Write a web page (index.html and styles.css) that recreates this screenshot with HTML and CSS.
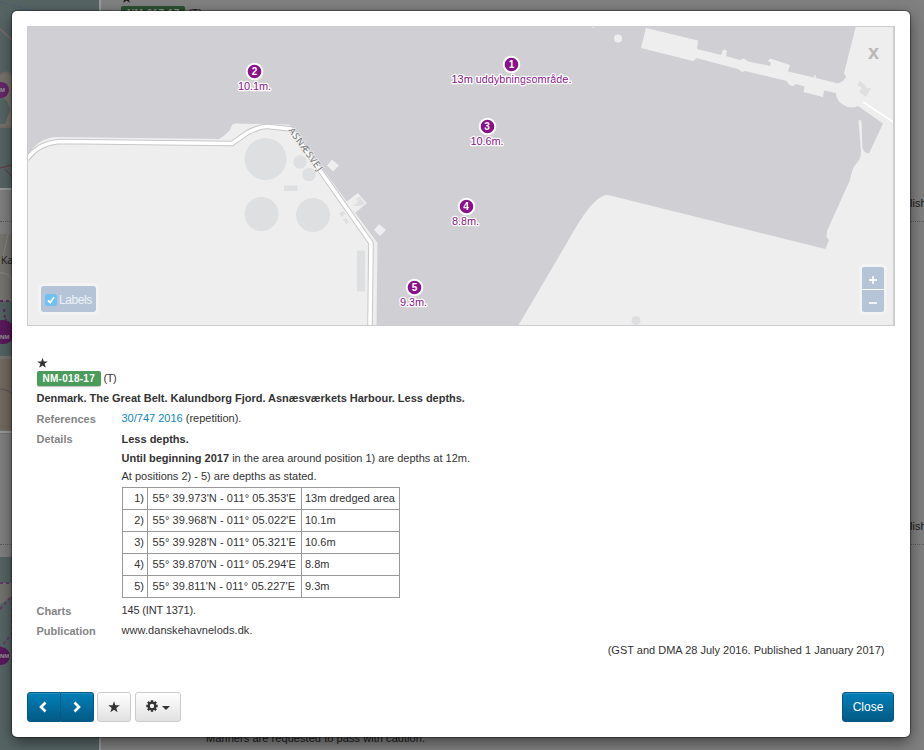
FILE: index.html
```
<!DOCTYPE html>
<html lang="en">
<head>
<meta charset="utf-8">
<title>NM-018-17</title>
<link rel="stylesheet" href="styles.css">
</head>
<body>
<div class="page">
  <section class="row row-first">
    <svg class="thumb" width="101" height="190" viewBox="0 0 101 190">
      <rect width="101" height="190" fill="#9b9b9b"/><rect width="99" height="188" fill="#566564"/>
      <path d="M0 29L12 40M0 75q8-6 12 2v50H0z" stroke="#766b6a" stroke-width="2" fill="#77746d"/>
      <path d="M0 98q7-2 10 12l-5 14H0z" fill="#566564"/>
      <path d="M0 168l12-3M5 169l7 8" stroke="#6e3442" fill="none"/>
      <circle cy="90" cx="1" r="8" fill="#65276a"/><text x="0" y="92" class="thumb-mark">M</text>
      <path d="M0 2l40 10" stroke="#4d5c74" stroke-dasharray="4 2"/>
    </svg>
    <div class="row-text">
      <svg class="star" viewBox="0 0 12 12"><path d="M6 .2l1.400 4.100h4.400L8.300 6.900l1.300 4.400L6 8.700l-3.600 2.600 1.300-4.400L.2 4.300h4.400z"/></svg>
      <div><span class="badge">NM-017-17</span> (T)</div>
    </div>
    <span class="published">Published</span>
  </section>
  <section class="row row-second">
    <svg class="thumb" width="101" height="200" viewBox="0 0 101 200">
      <rect width="101" height="200" fill="#777570"/>
      <path d="M0 67h14v55H0z" fill="#536363"/><path d="M0 67h14M4 75l2 20M0 105l7-22" stroke="#582b5b" stroke-width="2" stroke-dasharray="3 3" fill="none"/>
      <circle cx="3" cy="98" r="12" fill="#5b195e"/><text x="0" y="105" class="thumb-mark">NM</text>
      <path d="M0 125h14v71H0z" fill="#746a60"/><path d="M0 155q8 0 14 7" stroke="#555" fill="none"/>
      <text x="1" y="30" class="place">Ka</text>
      <path d="M0 39q8-2 14 10M8 0L3 24" stroke="#888" fill="none"/>
      <path d="M0 198h101" stroke="#999" stroke-width="2"/>
    </svg>
    <span class="published">Published</span>
  </section>
  <section class="row row-third">
    <svg class="thumb" width="101" height="194" viewBox="0 0 101 194">
      <rect width="101" height="194" fill="#9b9b9b"/><rect width="99" height="194" fill="#566564"/>
      <path d="M0 26h12v13L0 48z" fill="#73736f"/><path d="M0 26h12M0 52l12-13v38L0 91" stroke="#643b67" stroke-width="2" stroke-dasharray="3 3" fill="none"/>
      <circle cx="1" cy="99" r="9" fill="#5b195e"/><text x="0" y="101" class="thumb-mark">NM</text>
    </svg>
    <p class="caution">Mariners are requested to pass with caution.</p>
  </section>
</div>

<main class="modal">
  <div class="map">
    <svg class="map-art" width="868" height="300" viewBox="27 26 868 300">
      <rect x="27" y="26" width="868" height="300" fill="#d0cfd4"/>
      <g fill="#eee">
        <path d="M27 157Q37 138 56 137L219 139Q226 135 230 130L232 125Q233 123.500 236 123.500L288 124.500Q291 125 293 129L377.500 243L376.500 326H27z"/>
        <path d="M641 48L646 28L698 40.500L697 49L721 55L723 50Q725 49 727 51L726 56L740 60L744 58.500L748 61.500L770 66L771 63L768 61L770 58.500L790 65L788 71.500L814 77.500L815 74L816 78L838 83.500Q844 81 846 77L844 73L856 26H895V326H518L568 241Q592 197 606 195L610 195.500L825.500 249L829 240L826.500 237L827 231L850 180Q852 168 856 164Q861 159 861 152L858.500 121Q860 118 861.500 122L862.500 148Q864 153 869 153.500L883 123.500L858 106Q850 110 842 104Q836 100 836 93L824 90.500L823 97L803.500 92L804.500 86.500L796 84Q792 88 788 83.500L787 81L745 71L742 72L738 69L700 59L697 58L693 61z"/>
        <circle cx="618" cy="38.500" r="4"/><circle cx="593" cy="26.500" r="1.500"/>
        <path d="M332 159.500l7 6-6 6-6-6zM379 224l7 6-6 6-6-6zM346 202l12-9 4 5 5 5-12 10z"/>
      </g>
      <g fill="#dedfe1">
        <circle cx="265.500" cy="159" r="21"/><circle cx="300" cy="162" r="6.800"/><circle cx="309" cy="174.500" r="6.800"/>
        <circle cx="261.500" cy="214" r="17"/><circle cx="313" cy="215" r="17"/><circle cx="636" cy="320.500" r="4.500"/>
        <path d="M284 185.500h13.500v5.500H284zM357 250.500h8v41h-8zM339 214l4-3 2 3-3 3zM343 219l3-1 3 4-3 2zM353 206l5-4-2-4 4-1 5 7-5 2z"/>
        <path d="M860 81l5 4 2 3h4l-5 9-7-5 3-4-5-3z"/>
      </g>
      <g fill="none" stroke-linejoin="round">
        <path d="M27 159Q38 144 56 142L60 141.500L232 143.500L247 133Q260 126 268 126.500L291 129L371 243L370 326" stroke="#c8c8ca" stroke-width="5.600"/>
        <path d="M27 159Q38 144 56 142L60 141.500L232 143.500L247 133Q260 126 268 126.500L291 129L371 243L370 326" stroke="#fff" stroke-width="3.600"/>
        <path d="M863 102L895 123" stroke="#fff" stroke-width="1.500"/>
      </g>
      <text class="road-name" transform="translate(288 130.500) rotate(54)" textLength="51">ASNÆSVEJ</text>
      <g class="pins">
        <g><circle cx="511.500" cy="64.500" r="7.800"/><text class="pin-no" x="511.500" y="68">1</text><text class="pin-label" x="511.500" y="83" textLength="120">13m uddybningsområde.</text></g>
        <g><circle cx="254.500" cy="71.500" r="7.800"/><text class="pin-no" x="254.500" y="75">2</text><text class="pin-label" x="254.500" y="90" textLength="33">10.1m.</text></g>
        <g><circle cx="487.500" cy="126.500" r="7.800"/><text class="pin-no" x="487" y="130">3</text><text class="pin-label" x="487" y="145" textLength="33">10.6m.</text></g>
        <g><circle cx="466.500" cy="206.500" r="7.800"/><text class="pin-no" x="466" y="210">4</text><text class="pin-label" x="465.500" y="225" textLength="27">8.8m.</text></g>
        <g><circle cx="414.500" cy="287.500" r="7.800"/><text class="pin-no" x="414.500" y="291">5</text><text class="pin-label" x="413.500" y="306" textLength="27">9.3m.</text></g>
      </g>
      <path d="M27 26.500H895M27.500 26V326M27 325.500H895" stroke="#cdcdcf"/><path d="M894 26V326" stroke="#cdcdcf" stroke-width="2"/>
    </svg>
    <span class="map-close">x</span>
    <label class="labels-toggle"><svg width="12" height="12" viewBox="0 0 12 12"><rect width="12" height="12" rx="2.500" fill="#6fc0f5"/><path d="M3 6.300l2.200 2.300L9 3.300" fill="none" stroke="#fff" stroke-width="1.700"/></svg><span>Labels</span></label>
    <div class="zoom">
      <span><svg width="8" height="8" viewBox="0 0 8 8"><path d="M0 4h8M4 0v8" stroke="#f7f9fb" stroke-width="1.800"/></svg></span>
      <span><svg width="8" height="8" viewBox="0 0 8 8"><path d="M0 4h8" stroke="#f7f9fb" stroke-width="1.800"/></svg></span>
    </div>
  </div>

  <article class="message">
    <svg class="star" viewBox="0 0 12 12"><path d="M6 .2l1.400 4.100h4.400L8.300 6.900l1.300 4.400L6 8.700l-3.600 2.600 1.300-4.400L.2 4.300h4.400z"/></svg>
    <div class="ident"><span class="badge">NM-018-17</span><span class="kind">(T)</span></div>
    <h1>Denmark. The Great Belt. Kalundborg Fjord. Asnæsværkets Harbour. Less depths.</h1>
    <dl>
      <dt class="low">References</dt><dd><a>30/747 2016</a> (repetition).</dd>
      <dt>Details</dt>
      <dd>
        <p class="lead"><b>Less depths.</b></p>
        <p><b>Until beginning 2017</b> in the area around position 1) are depths at 12m.</p>
        <p>At positions 2) - 5) are depths as stated.</p>
        <table>
          <colgroup><col class="c1"><col class="c2"><col class="c3"></colgroup>
          <tr><td>1)</td><td class="pos">55° 39.973'N - 011° 05.353'E</td><td>13m dredged area</td></tr>
          <tr><td>2)</td><td class="pos">55° 39.968'N - 011° 05.022'E</td><td>10.1m</td></tr>
          <tr><td>3)</td><td class="pos">55° 39.928'N - 011° 05.321'E</td><td>10.6m</td></tr>
          <tr><td>4)</td><td class="pos">55° 39.870'N - 011° 05.294'E</td><td>8.8m</td></tr>
          <tr><td>5)</td><td class="pos">55° 39.811'N - 011° 05.227'E</td><td>9.3m</td></tr>
        </table>
      </dd>
      <dt class="low">Charts</dt><dd class="charts">145 (INT 1371).</dd>
      <dt>Publication</dt><dd class="web">www.danskehavnelods.dk.</dd>
    </dl>
    <p class="source">(GST and DMA 28 July 2016. Published 1 January 2017)</p>
  </article>

  <footer class="actions">
    <div class="pair">
      <button class="btn primary prev"><svg width="8" height="12" viewBox="0 0 8 12"><path d="M6.500 1.500L2 6l4.500 4.500" fill="none" stroke="#fff" stroke-width="2.600"/></svg></button><button class="btn primary next"><svg width="8" height="12" viewBox="0 0 8 12"><path d="M1.500 1.500L6 6l-4.500 4.500" fill="none" stroke="#fff" stroke-width="2.600"/></svg></button>
    </div>
    <button class="btn fav"><svg width="12" height="12" viewBox="0 0 12 12"><path d="M6 .2l1.400 4.100h4.400L8.300 6.900l1.300 4.400L6 8.700l-3.600 2.600 1.300-4.400L.2 4.300h4.400z" fill="#333"/></svg></button>
    <button class="btn gear"><svg width="12" height="12" viewBox="0 0 12 12"><circle cx="6" cy="6" r="3.300" fill="none" stroke="#333" stroke-width="2.200"/><path d="M6 .3v2.200M6 9.500v2.200M.3 6h2.200M9.500 6h2.200M1.900 1.900l1.600 1.600M8.500 8.500l1.600 1.600M10.100 1.900L8.500 3.500M3.500 8.500l-1.600 1.600" stroke="#333" stroke-width="2.400"/></svg><i class="caret"></i></button>
    <button class="btn primary close">Close</button>
  </footer>
</main>
</body>
</html>
```
FILE: styles.css
```
* { box-sizing: border-box; }
body {
  margin: 0;
  height: 750px;
  overflow: hidden;
  background: #808080;
  color: #333;
  font: 11px/18px "Liberation Sans", Arial, sans-serif;
}
p, h1, dl, dd { margin: 0; }

/* dimmed list behind the dialog */
.page { height: 750px; color: #1a1a1a; }
.row { position: relative; display: flex; overflow: hidden; border-bottom: 1px dotted #5a5a5a; }
.row-first { height: 222px; }
.row-second { height: 323px; padding-top: 12px; }
.row-third { height: 205px; padding-top: 12px; border: 0; }
.thumb { flex: none; display: block; }
.row-text { margin: -8px 0 0 20px; }
.row-text .star { fill: #1a1a1a; }
.row-text .badge { background: #28502f; color: #999; }
.published { position: absolute; left: 890.5px; bottom: 9px; font-size: 11px; }
.caution { align-self: flex-end; margin: 0 0 3px 105px; letter-spacing: .06px; }
.thumb-mark { font: bold 6px "Liberation Sans", sans-serif; fill: #999; }
.place { font: 10px "Noto Sans", sans-serif; fill: #222; }

.modal {
  position: absolute;
  left: 12px;
  top: 11px;
  width: 898px;
  height: 726px;
  padding: 15px;
  background: #fff;
  border-radius: 5px;
  box-shadow: 0 0 1px 1px rgba(0,0,0,.35), 0 5px 15px rgba(0,0,0,.5);
  display: flex;
  flex-direction: column;
}

.map { position: relative; height: 300px; flex: none; }
.map-art { display: block; }
.road-name { font: 9.5px "Noto Sans", sans-serif; fill: #777; stroke: #eee; stroke-width: 1.5px; paint-order: stroke; }
.pins circle { fill: #8b118b; stroke: #fff; stroke-width: 2px; }
.pins text { text-anchor: middle; }
.pin-no { font: bold 10px "Liberation Sans", sans-serif; fill: #fff; }
.pin-label { font: 11px "Liberation Sans", sans-serif; fill: #8b118b; stroke: #fff; stroke-width: 2.5px; stroke-linejoin: round; paint-order: stroke; }
.map-close { position: absolute; right: 16px; top: 16px; font: bold 20px/20px "Liberation Sans", sans-serif; color: #b8b8b9; }
.labels-toggle {
  position: absolute; left: 14px; top: 260px;
  width: 55px; height: 26px; padding-left: 4px;
  display: flex; align-items: center; gap: 2px;
  border-radius: 3px; background: #b5c4d6; color: #eef2f7;
  font-size: 12px; letter-spacing: -.4px; box-shadow: 0 0 0 3px rgba(255,255,255,.3);
}
.labels-toggle span { padding-top: 2px; }
.labels-toggle svg { margin-top: 2px; }
.zoom {
  position: absolute; left: 835px; top: 241px; width: 22px; height: 45px;
  display: flex; flex-direction: column; gap: 1px;
  border-radius: 2px; background: #f5f6f7; box-shadow: 0 0 0 3px rgba(255,255,255,.3);
}
.zoom span { flex: 1; display: grid; place-items: center; padding-top: 3px; background: #b5c4d6; border-radius: 2px 2px 0 0; }
.zoom span + span { border-radius: 0 0 2px 2px; }

.message { padding: 31px 10.5px 0 9.5px; }
.star { display: block; width: 11px; height: 12px; fill: #333; }
.ident { display: flex; align-items: center; gap: 3px; height: 18px; margin-top: 1px; }
.kind { margin-top: -2px; letter-spacing: -.5px; }
.badge {
  display: inline-block; width: 64px; height: 15px; padding: 0 0 0 6px; border-radius: 2px;
  background: #4b9b5b; color: #fff; font-weight: bold; font-size: 10px; line-height: 15px;
  letter-spacing: .28px; white-space: nowrap;
  box-shadow: 0 1px 1px rgba(0,0,0,.25);
}
.ident .badge { margin-top: -1px; }
.message h1 { margin: 1px 0 2px; font-size: 11px; line-height: 18px; letter-spacing: -.02px; }
dl { display: grid; grid-template-columns: 85px 1fr; row-gap: 2px; }
dt { color: #848484; font-weight: bold; }
dt.low { padding-top: 1px; }
dd a { color: #0d87bd; }
.lead { margin-bottom: 1px; }
.charts { letter-spacing: -.16px; }
.web { letter-spacing: .06px; margin-top: -1px; }
table { width: 278px; margin: 2px 0 1px .5px; table-layout: fixed; border-collapse: collapse; }
.c1 { width: 25px; } .c2 { width: 154px; } .c3 { width: 98px; }
td { height: 22px; padding: 0 3px 2px; border: 1px solid #999; line-height: 18px; white-space: nowrap; }
td:first-child { text-align: right; }
td.pos { padding-left: 4.5px; letter-spacing: .08px; }
.source { text-align: right; margin-top: 1px; }

.actions { display: flex; margin-top: auto; height: 30px; padding-right: 1px; }
.pair { display: flex; margin-right: 3px; }
.btn {
  display: flex; align-items: center; justify-content: center;
  height: 30px; padding: 0; border: 1px solid #ccc; border-radius: 3px;
  background: linear-gradient(#fff, #e1e1e1); color: #333;
  font: 12px "Liberation Sans", sans-serif;
}
.primary { border-color: #055880; background: linear-gradient(#0080b8, #035a85); color: #fff; box-shadow: inset 0 1px 0 rgba(255,255,255,.12); }
.prev { width: 34px; border-radius: 3px 0 0 3px; padding-right: 2px; }
.next { width: 33px; border-left: 0; border-radius: 0 3px 3px 0; }
.fav { width: 34px; margin-right: 4px; padding-bottom: 1px; }
.gear { width: 46px; gap: 4px; padding: 0 1px 2px 0; }
.caret { border: 4px solid transparent; border-top-color: #333; border-bottom: 0; margin-top: 4px; }
.close { width: 52px; margin-left: auto; }
```
